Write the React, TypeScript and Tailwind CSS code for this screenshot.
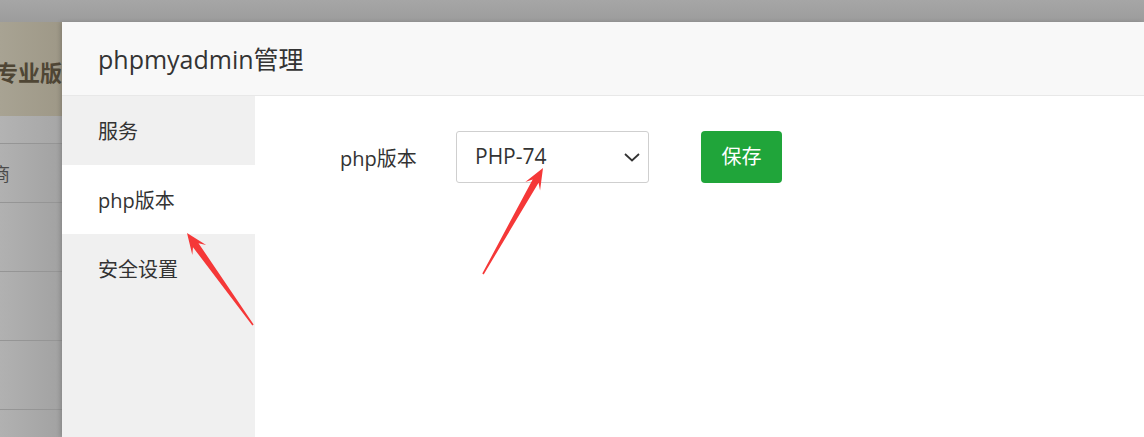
import React from "react";

const font = { fontFamily: '"Open Sans", "Noto Sans CJK SC", sans-serif' };

type Pt = [number, number];

// screenshot-style annotation arrow: pointed tail, widening shaft, swept barbs
function arrowPoints(tail: Pt, tip: Pt) {
  const dx = tip[0] - tail[0];
  const dy = tip[1] - tail[1];
  const len = Math.hypot(dx, dy);
  const ux = dx / len;
  const uy = dy / len;
  const nx = -uy;
  const ny = ux;
  const at = (d: number, w: number): Pt => [tail[0] + ux * d + nx * w, tail[1] + uy * d + ny * w];
  const pts: Pt[] = [
    at(0, 0.8),
    at(len - 15, 3.4),
    at(len - 21, 8.5),
    tip,
    at(len - 21, -8.5),
    at(len - 15, -3.4),
    at(0, -0.8),
  ];
  return pts.map((p) => p.join(",")).join(" ");
}

function Arrows() {
  return (
    <svg className="pointer-events-none absolute inset-0" width="1144" height="437">
      <polygon points={arrowPoints([253, 325], [187, 233])} fill="#f53838" />
      <polygon points={arrowPoints([483, 274], [543, 168])} fill="#f53838" />
    </svg>
  );
}

function BackdropStrip() {
  return (
    <div className="flex w-[62px] shrink-0 flex-col overflow-hidden bg-gradient-to-r from-[#b1b1b1] to-[#a2a2a2]">
      <div className="flex h-[94px] items-center bg-gradient-to-r from-[#a8a393] to-[#9e9887] pt-[6px]">
        <span className="-ml-[4px] whitespace-nowrap text-[22px] font-bold text-[#4f4635]">专业版</span>
      </div>
      <div className="h-[28px] border-b border-[#959595] bg-gradient-to-r from-[#b3b3b3] to-[#a6a6a6]" />
      <div className="flex h-[59px] items-center border-b border-[#959595] pt-[2px]">
        <span className="-ml-[8px] text-[18px] text-[#4a4a4a]">商</span>
      </div>
      <div className="h-[69px] border-b border-[#959595]" />
      <div className="h-[69px] border-b border-[#959595]" />
      <div className="h-[69px] border-b border-[#959595]" />
      <div className="flex-1" />
    </div>
  );
}

function SideMenu() {
  const items = ["服务", "php版本", "安全设置"];
  return (
    <div className="w-[193px] shrink-0 bg-[#f0f0f0]">
      {items.map((item) => (
        <div
          key={item}
          className={`flex h-[69px] items-center pl-[36px] pt-[3px] text-[20px] text-[#333] ${item === "php版本" ? "bg-white" : ""}`}
        >
          {item}
        </div>
      ))}
    </div>
  );
}

function VersionForm() {
  return (
    <div className="flex flex-1 items-start bg-white pl-[85px] pt-[35px]">
      <div className="flex items-center">
        <span className="w-[116px] pt-[3px] text-[20px] text-[#333]">php版本</span>
        <div className="flex h-[52px] w-[193px] items-center justify-between rounded-[3px] border border-[#cfcfcf] pl-[18px] pr-[7px]">
          <span className="text-[21px] text-[#333]">PHP-74</span>
          <svg width="18" height="18" viewBox="0 0 18 18" fill="none" stroke="#333" strokeWidth="1.8">
            <path d="M2 6 9 12.5 16 6" />
          </svg>
        </div>
        <button className="ml-[52px] h-[52px] w-[81px] rounded-[4px] bg-[#20a53a] text-[20px] text-white">保存</button>
      </div>
    </div>
  );
}

export default function App() {
  return (
    <div className="relative flex h-[437px] w-[1144px] flex-col overflow-hidden bg-[#a3a3a3]" style={font}>
      <div className="h-[22px] shrink-0 bg-gradient-to-b from-[#a6a6a6] to-[#9c9c9c]" />
      <div className="flex min-h-0 flex-1">
        <BackdropStrip />
        <div className="flex flex-1 flex-col bg-white shadow-[-2px_0_4px_rgba(0,0,0,0.15)]">
          <div className="flex h-[74px] shrink-0 items-center border-b border-[#e8e8e8] bg-[#f8f8f8] pl-[36px] pt-[2px] text-[25px] text-[#333]">
            phpmyadmin管理
          </div>
          <div className="flex flex-1">
            <SideMenu />
            <VersionForm />
          </div>
        </div>
      </div>
      <Arrows />
    </div>
  );
}
